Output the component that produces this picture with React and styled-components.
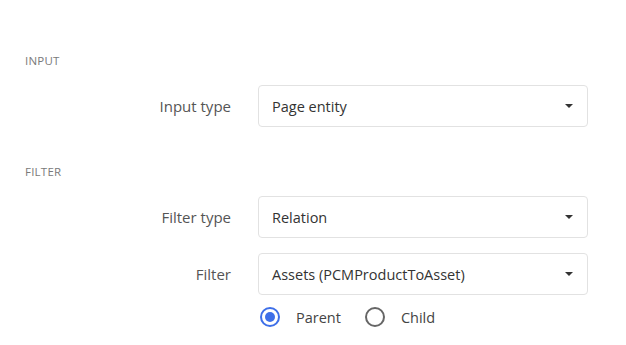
import React from "react";
import styled, { createGlobalStyle } from "styled-components";

const GlobalStyle = createGlobalStyle`
  body {
    margin: 0;
    background: #ffffff;
    font-family: "Open Sans", "Noto Sans", sans-serif;
  }
`;

const Page = styled.div`
  padding: 53px 25px 20px;
  display: flex;
  flex-direction: column;
  gap: 37px;
`;

const Section = styled.section`
  display: flex;
  flex-direction: column;
`;

const SectionTitle = styled.div`
  font-size: 11.5px;
  line-height: 16px;
  color: #7a7a7a;
  letter-spacing: 0.02em;
  margin-bottom: 16px;
`;

const Rows = styled.div`
  display: grid;
  grid-template-columns: 206px 330px;
  column-gap: 27px;
  row-gap: 15px;
  align-items: center;
`;

const Label = styled.label`
  text-align: right;
  font-size: 15px;
  color: #555;
`;

const Select = styled.div`
  box-sizing: border-box;
  height: 42px;
  border: 1px solid #e2e2e2;
  border-radius: 4px;
  padding: 0 13px;
  display: flex;
  align-items: center;
  justify-content: space-between;
  font-size: 14.5px;
  color: #333;
`;

const Caret = styled.span`
  width: 0;
  height: 0;
  border-left: 4px solid transparent;
  border-right: 4px solid transparent;
  border-top: 4px solid #333;
  margin-right: 1px;
`;

const RadioRow = styled.div`
  grid-column: 2;
  display: flex;
  align-items: center;
  margin-top: -3px;
  gap: 22px;
`;

const RadioOption = styled.label`
  display: flex;
  align-items: center;
  gap: 16px;
  font-size: 14.5px;
  color: #444;
`;

const RadioCircle = styled.span`
  box-sizing: border-box;
  width: 20px;
  height: 20px;
  margin-left: 2px;
  border-radius: 50%;
  border: 2px solid ${(p) => (p.checked ? "#3e6fe8" : "#666")};
  display: flex;
  align-items: center;
  justify-content: center;

  &::after {
    content: "";
    display: ${(p) => (p.checked ? "block" : "none")};
    width: 10px;
    height: 10px;
    border-radius: 50%;
    background: #3e6fe8;
  }
`;

function Dropdown({ value }) {
  return (
    <Select>
      <span>{value}</span>
      <Caret />
    </Select>
  );
}

export default function App() {
  return (
    <>
      <GlobalStyle />
      <Page>
        <Section>
          <SectionTitle>INPUT</SectionTitle>
          <Rows>
            <Label>Input type</Label>
            <Dropdown value="Page entity" />
          </Rows>
        </Section>
        <Section>
          <SectionTitle>FILTER</SectionTitle>
          <Rows>
            <Label>Filter type</Label>
            <Dropdown value="Relation" />
            <Label>Filter</Label>
            <Dropdown value="Assets (PCMProductToAsset)" />
            <RadioRow>
              <RadioOption>
                <RadioCircle checked />
                Parent
              </RadioOption>
              <RadioOption>
                <RadioCircle />
                Child
              </RadioOption>
            </RadioRow>
          </Rows>
        </Section>
      </Page>
    </>
  );
}
